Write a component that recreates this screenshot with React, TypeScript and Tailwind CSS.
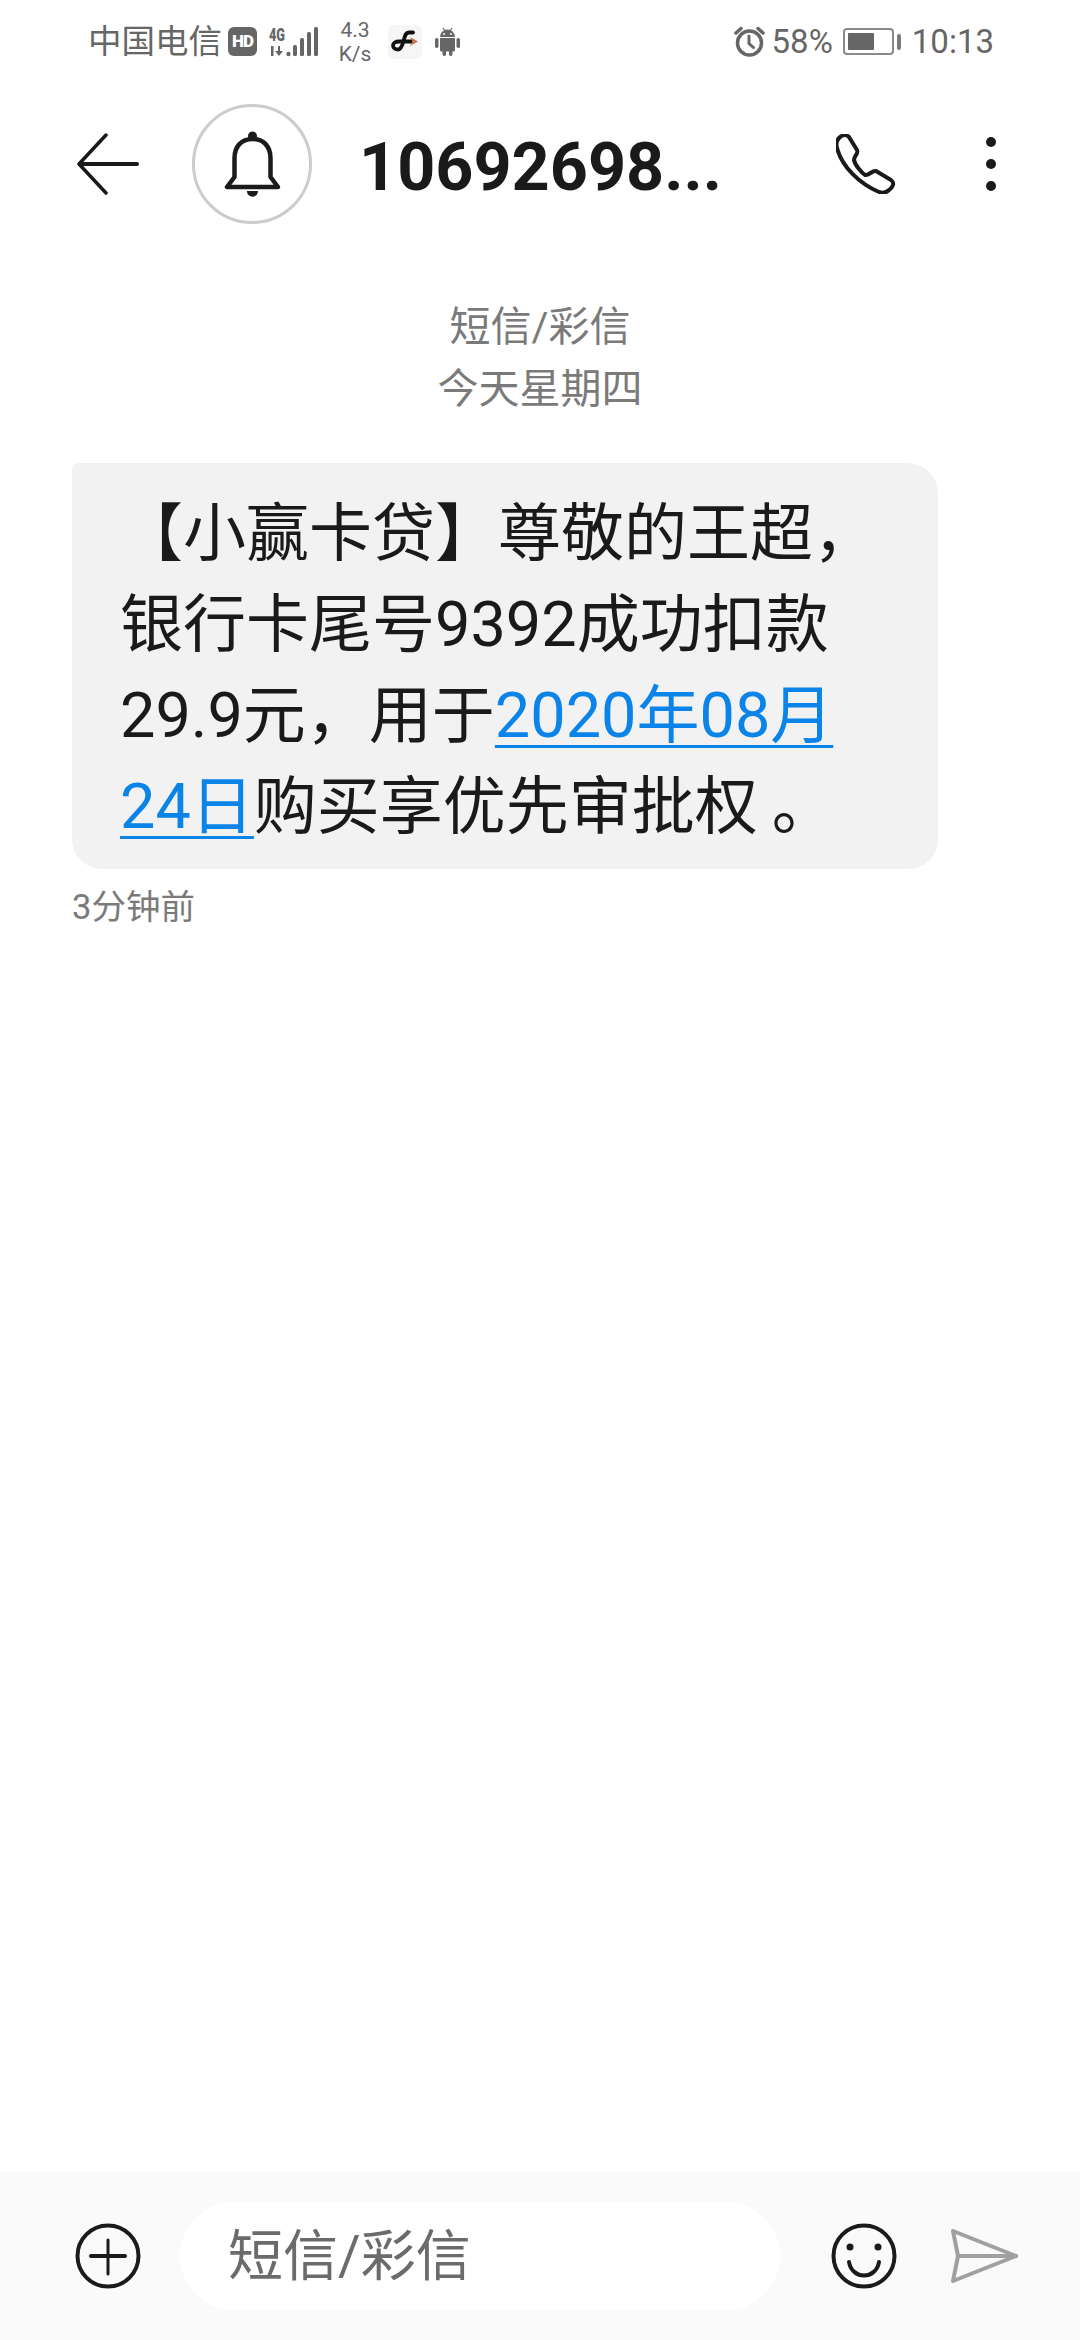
const fontStack = "[font-family:Roboto,'Noto_Sans_CJK_SC',sans-serif]";

function HdBadge() {
  return (
    <div className="flex h-[29px] w-[29px] items-center justify-center rounded-[6px] bg-[#666666] text-[17px] font-black leading-none tracking-[-1px] text-white">
      HD
    </div>
  );
}

function SignalIcon() {
  return (
    <svg width="49" height="30" viewBox="0 0 49 30" fill="#666666">
      <text x="0" y="13.5" fontSize="18" fontWeight="900" fontFamily="Roboto" textLength="16" lengthAdjust="spacingAndGlyphs">4G</text>
      <rect x="2" y="19" width="2.500" height="10" />
      <path d="M9 19h2v5h3l-4 5-4-5h3z" />
      <circle cx="19.500" cy="27" r="2.200" />
      <rect x="24" y="18" width="4" height="11" rx="1.500" />
      <rect x="31" y="11" width="4" height="18" rx="1.500" />
      <rect x="38" y="5" width="4" height="24" rx="1.500" />
      <rect x="45" y="0" width="4" height="29" rx="1.500" />
    </svg>
  );
}

function AppIcon() {
  return (
    <div className="flex h-[34px] w-[34px] items-center justify-center rounded-[6px] bg-[#f6f6f6]">
      <svg width="28" height="23" viewBox="0 0 28 23" fill="none">
        <path d="M22 2.500h-4c-3.500 0-4 3-5 7s-2.500 10-6 10c-2.500 0-5-1.500-5-4s2.500-4 6-4h14" stroke="#111111" strokeWidth="3.800" strokeLinecap="round" />
        <path d="M19 7l8 4.500-8 4.500 2.500-4.500z" fill="#c9764f" />
      </svg>
    </div>
  );
}

function AndroidIcon() {
  return (
    <svg width="25" height="29" viewBox="0 0 25 29" fill="#666666">
      <path d="M5 10a7.500 7.500 0 0 1 15 0z" />
      <path d="M8 1l2 3M17 1l-2 3" stroke="#666666" strokeWidth="1.200" />
      <path d="M5 11h15v12a1.500 1.500 0 0 1-1.500 1.500H6.500A1.500 1.500 0 0 1 5 23z" />
      <rect x="0" y="11" width="3.500" height="10" rx="1.700" />
      <rect x="21.500" y="11" width="3.500" height="10" rx="1.700" />
      <rect x="7.500" y="23" width="3.500" height="6" rx="1.700" />
      <rect x="14" y="23" width="3.500" height="6" rx="1.700" />
      <circle cx="9" cy="7" r="1" fill="#ffffff" />
      <circle cx="16" cy="7" r="1" fill="#ffffff" />
    </svg>
  );
}

function AlarmIcon() {
  return (
    <svg width="31" height="31" viewBox="0 0 31 31" fill="none" stroke="#666666" strokeWidth="3.500" strokeLinecap="round">
      <circle cx="15.500" cy="17" r="12" />
      <path d="M15 10v7.500l4.500 4" strokeWidth="3" />
      <path d="M2 7l5-4.500M29 7l-5-4.500" />
    </svg>
  );
}

function BatteryIcon() {
  return (
    <div className="flex items-center gap-[3px]">
      <div className="flex h-[27px] w-[51px] items-stretch rounded-[4px] border-2 border-[#8a8a8a] p-[3px]">
        <div className="w-[26px] rounded-[1px] bg-[#666666]" />
      </div>
      <div className="h-[16px] w-[4px] rounded-[2px] bg-[#7a7a7a]" />
    </div>
  );
}

function BackIcon() {
  return (
    <svg width="62" height="62" viewBox="0 0 62 62" fill="none" stroke="#1a1a1a" strokeWidth="3.500" strokeLinecap="round" strokeLinejoin="round">
      <path d="M29 2L2 31l27 29" />
      <path d="M3 31h57" strokeWidth="4" />
    </svg>
  );
}

function BellIcon() {
  return (
    <svg width="57" height="66" viewBox="0 0 57 66" fill="none" stroke="#1a1a1a" strokeWidth="4.500" strokeLinejoin="round">
      <path d="M28.500 8C17 8 10.500 16 10.500 27v19L3 56h51l-7.500-10V27C46.500 16 40 8 28.500 8z" />
      <circle cx="28.500" cy="5" r="4.500" fill="#1a1a1a" stroke="none" />
      <path d="M23 60h11c0 7.500-11 7.500-11 0z" fill="#1a1a1a" stroke="none" />
    </svg>
  );
}

function PhoneIcon() {
  return (
    <svg width="60" height="60" viewBox="0 0 60 60" fill="none" stroke="#1a1a1a" strokeWidth="4" strokeLinejoin="round">
      <path d="M3 4C6 1 10 0 13 3l8 13c2 3-3 6-3 10 1 5 7 12 11 15 4 1 7-5 11-4l15 9c4 3 2 7-2 10-3 3-7 3-10 2C24 50 6 33 1 14 0 10 1 6 3 4z" />
    </svg>
  );
}

function PlusCircleIcon() {
  return (
    <svg width="66" height="66" viewBox="0 0 66 66" fill="none" stroke="#1a1a1a" strokeLinecap="round">
      <circle cx="33" cy="33" r="30.500" strokeWidth="4" />
      <path d="M33 17v34" strokeWidth="3" />
      <path d="M16 33h34" strokeWidth="4" />
    </svg>
  );
}

function SmileIcon() {
  return (
    <svg width="66" height="66" viewBox="0 0 66 66" fill="none" stroke="#1a1a1a" strokeLinecap="round">
      <circle cx="33" cy="33" r="30.500" strokeWidth="4" />
      <circle cx="19" cy="24" r="3.500" fill="#1a1a1a" stroke="none" />
      <circle cx="47" cy="24" r="3.500" fill="#1a1a1a" stroke="none" />
      <path d="M18 39c3 18 27 18 30 0" strokeWidth="4" />
    </svg>
  );
}

function SendIcon() {
  return (
    <svg width="68" height="56" viewBox="0 0 68 56" fill="none" stroke="#a0a0a0" strokeWidth="4" strokeLinejoin="round" strokeLinecap="round">
      <path d="M3 3l63 25L3 53l5-25z" />
      <path d="M8 28h58" />
    </svg>
  );
}

export default function App() {
  return (
    <div className={`flex h-[2340px] w-[1080px] flex-col bg-white ${fontStack}`}>
      {/* Status bar */}
      <div className="flex h-[82px] items-center pl-[88px] pr-[86px] pt-[1px] text-[#666666]">
        <span className="whitespace-nowrap text-[33.5px] leading-[48px]">中国电信</span>
        <div className="ml-[6px]"><HdBadge /></div>
        <div className="ml-[12px]"><SignalIcon /></div>
        <div className="ml-[20px] w-[34px] text-center text-[21px] leading-[24px]">
          <div>4.3</div>
          <div>K/s</div>
        </div>
        <div className="ml-[16px]"><AppIcon /></div>
        <div className="ml-[13px]"><AndroidIcon /></div>
        <div className="ml-auto"><AlarmIcon /></div>
        <span className="ml-[7px] text-[33px] leading-[48px]">58%</span>
        <div className="ml-[10px]"><BatteryIcon /></div>
        <span className="ml-[11px] text-[33px] leading-[48px]">10:13</span>
      </div>

      {/* Header */}
      <div className="flex h-[164px] items-center">
        <div className="ml-[77px]"><BackIcon /></div>
        <div className="ml-[53px] flex h-[120px] w-[120px] items-center justify-center rounded-full border-[3px] border-[#cccccc]">
          <BellIcon />
        </div>
        <h1 className="ml-[47px] mt-[6px] w-[363px] whitespace-nowrap text-[66.5px] font-bold leading-none text-[#1a1a1a]">10692698...</h1>
        <div className="ml-[114px]"><PhoneIcon /></div>
        <div className="ml-[90px] flex flex-col gap-[12px]">
          <div className="h-[10px] w-[10px] rounded-full bg-[#1a1a1a]" />
          <div className="h-[10px] w-[10px] rounded-full bg-[#1a1a1a]" />
          <div className="h-[10px] w-[10px] rounded-full bg-[#1a1a1a]" />
        </div>
      </div>

      {/* Messages */}
      <div className="flex-1 px-[72px]">
        <div className="mt-[50px] text-center text-[41px] leading-[62px] text-[#7a7a7a]">
          <div>短信/彩信</div>
          <div>今天星期四</div>
        </div>
        <div className="mt-[43px] h-[406px] w-[866px] rounded-[30px] rounded-tl-[6px] bg-[#f2f2f2] pl-[48px] pt-[25px] text-[63px] leading-[91px] text-[#1a1a1a]">
          【小赢卡贷】尊敬的王超，
          <br />
          银行卡尾号9392成功扣款
          <br />
          29.9元，用于
          <a className="text-[#0a84e8] underline decoration-[3px] underline-offset-[8px]">
            2020年08月
            <br />
            24日
          </a>
          购买享优先审批权<span className="ml-[14px]">。</span>
        </div>
        <div className="mt-[16px] text-[34.5px] leading-[44px] text-[#7a7a7a]">3分钟前</div>
      </div>

      {/* Composer */}
      <div className="flex h-[168px] items-center bg-[#fafafa]">
        <div className="ml-[75px]"><PlusCircleIcon /></div>
        <div className="ml-[39px] flex h-[108px] w-[600px] items-center rounded-full bg-white pl-[48px] text-[55px] leading-none text-[#6b6b6b]">
          短信/彩信
        </div>
        <div className="ml-[51px]"><SmileIcon /></div>
        <div className="ml-[53px]"><SendIcon /></div>
      </div>
    </div>
  );
}
